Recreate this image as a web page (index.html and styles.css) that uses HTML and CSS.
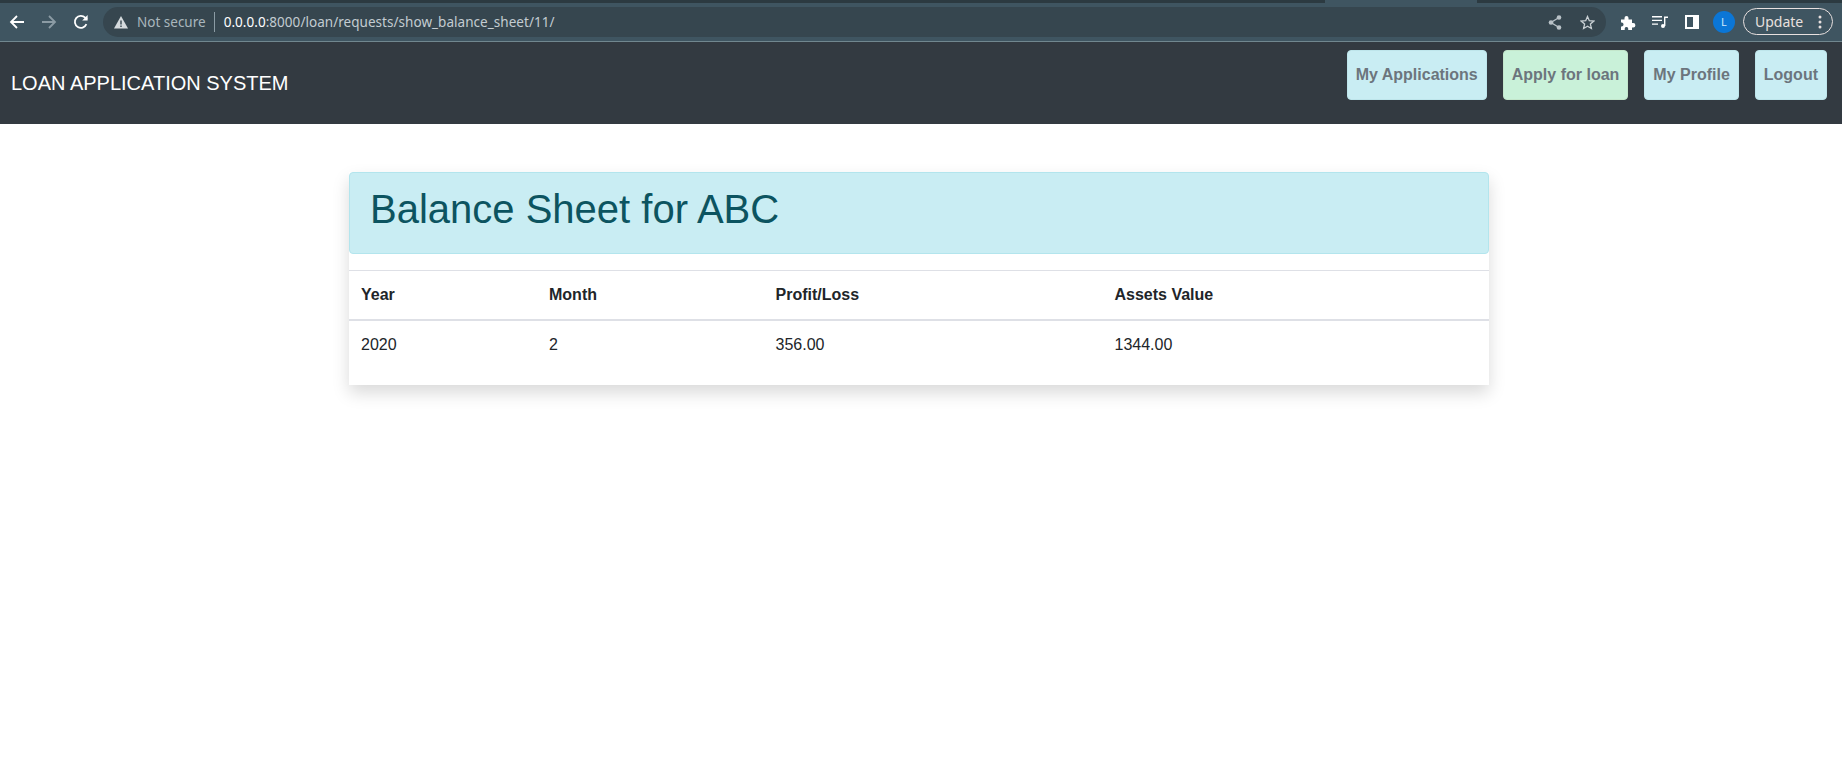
FILE: index.html
```html
<!DOCTYPE html>
<html lang="en">
<head>
    <meta charset="UTF-8">
    <meta name="viewport" content="width=device-width, initial-scale=1.0">
    <title>Balance Sheet for ABC</title>
    <link rel="stylesheet" href="styles.css">
</head>
<body>
    <div class="tabstrip">
        <div class="tab-active"></div>
    </div>
    <div class="toolbar">
        <span class="tool">
            <svg width="16" height="16" viewBox="0 0 16 16" fill="none" stroke="#fff" stroke-width="1.8"><path d="M15 8H2M8 2 2 8l6 6"/></svg>
        </span>
        <span class="tool">
            <svg width="16" height="16" viewBox="0 0 16 16" fill="none" stroke="#8b9ba4" stroke-width="1.8"><path d="M1 8h13M8 2l6 6-6 6"/></svg>
        </span>
        <span class="tool">
            <svg width="16" height="16" viewBox="0 0 16 16" fill="none" stroke="#fff" stroke-width="1.8"><path d="M13.4 10.2A6 6 0 1 1 12.2 3.7L14 5.4"/><path d="M14.6 1v5.4H9.2" fill="#fff" stroke="none"/></svg>
        </span>
        <div class="omnibox">
            <svg class="warn" width="14" height="13" viewBox="0 0 14 13"><path d="M7 0 14 12.500H0Z" fill="#d5dadd"/><path d="M6.300 4.500h1.400v4H6.300zM6.300 9.500h1.400v1.400H6.300z" fill="#36464f"/></svg>
            <span class="not-secure">Not secure</span>
            <span class="url"><b>0.0.0.0</b>:8000/loan/requests/show_balance_sheet/11/</span>
            <span class="omni-icons">
                <svg width="14" height="15" viewBox="0 0 14 15" fill="#b9c2c7"><circle cx="11" cy="2.500" r="2.300"/><circle cx="3" cy="7.500" r="2.300"/><circle cx="11" cy="12.500" r="2.300"/><path d="M11 2.500 3 7.500l8 5" fill="none" stroke="#b9c2c7" stroke-width="1.300"/></svg>
                <svg width="15" height="15" viewBox="0 0 15 15" fill="none" stroke="#c9d0d4" stroke-width="1.300"><path d="M7.500 1.500 9.300 5.700l4.500.4-3.400 3 1 4.400-3.900-2.300-3.900 2.300 1-4.400-3.400-3 4.500-.4Z"/></svg>
            </span>
        </div>
        <span class="tool">
            <svg width="15" height="15" viewBox="0 0 15 15" fill="#fff"><path d="M0 4.500h3.500V3a2 2 0 0 1 4 0v1.500H11V8h1.200a2.200 2.200 0 0 1 0 4.400H11V15H7.200v-1.500a1.800 1.800 0 0 0-3.500 0V15H0v-3.500h1a2 2 0 0 0 0-3.900H0Z"/></svg>
        </span>
        <span class="tool">
            <svg width="16" height="12" viewBox="0 0 16 12" fill="#fff"><path d="M0 0h10v1.400H0zM0 3.700h10v1.400H0zM0 7.400h6v1.400H0z"/><circle cx="11" cy="10" r="2"/><path d="M12 10V.4h4v1.500h-2.600V10z"/></svg>
        </span>
        <span class="tool">
            <svg width="14" height="14" viewBox="0 0 14 14"><path d="M0 0h14v14H0Zm2 2v10h6V2Z" fill="#fff" fill-rule="evenodd"/></svg>
        </span>
        <span class="tool"><span class="avatar">L</span></span>
        <div class="update">
            <span>Update</span>
            <svg width="4" height="14" viewBox="0 0 4 14" fill="#e8e0df"><circle cx="2" cy="2" r="1.500"/><circle cx="2" cy="7" r="1.500"/><circle cx="2" cy="12" r="1.500"/></svg>
        </div>
    </div>

    <nav class="navbar">
        <a class="brand" href="#">LOAN APPLICATION SYSTEM</a>
        <div class="nav-buttons">
            <a class="btn btn-info" href="#">My Applications</a>
            <a class="btn btn-success" href="#">Apply for loan</a>
            <a class="btn btn-info" href="#">My Profile</a>
            <a class="btn btn-info" href="#">Logout</a>
        </div>
    </nav>

    <div class="page">
        <div class="card">
            <div class="alert">
                <h1>Balance Sheet for ABC</h1>
            </div>
            <table class="sheet">
                <thead>
                    <tr>
                        <th class="col-year">Year</th>
                        <th class="col-month">Month</th>
                        <th class="col-profit">Profit/Loss</th>
                        <th>Assets Value</th>
                    </tr>
                </thead>
                <tbody>
                    <tr>
                        <td>2020</td>
                        <td>2</td>
                        <td>356.00</td>
                        <td>1344.00</td>
                    </tr>
                </tbody>
            </table>
        </div>
    </div>
</body>
</html>
```

FILE: styles.css
```css
* {
    box-sizing: border-box;
}
body {
    min-height: 100vh;
    margin: 0;
    font-family: "Liberation Sans", Arial, sans-serif;
    font-size: 16px;
    line-height: 1.5;
    color: #212529;
    background-color: #fff;
}

/* browser chrome */
.tabstrip {
    height: 3px;
    padding-left: 1325px;
    background-color: #2c3a41;
}
.tab-active {
    width: 152px;
    height: 3px;
    background-color: #3f5561;
}
.toolbar {
    display: flex;
    align-items: center;
    height: 39px;
    padding: 0 9px 0 1px;
    background-color: #3f5561;
    border-bottom: 1px solid #71878f;
}
.tool {
    display: flex;
    align-items: center;
    justify-content: center;
    flex: none;
    width: 32px;
    height: 30px;
}
.omnibox {
    display: flex;
    align-items: center;
    flex: 1;
    height: 30px;
    margin: 0 6px;
    padding: 0 11px 0 11px;
    border-radius: 15px;
    background-color: #36464f;
    font-family: "Noto Sans", sans-serif;
    font-size: 13.5px;
    color: #c3ccd1;
}
.warn {
    flex: none;
}
.not-secure {
    margin-left: 9px;
    padding-right: 8px;
    border-right: 1px solid #8b9ba4;
    line-height: 20px;
    color: #a9b6bd;
}
.url {
    margin-left: 9px;
    letter-spacing: 0.04px;
}
.url b {
    font-weight: 400;
    color: #fff;
}
.omni-icons {
    display: flex;
    align-items: center;
    gap: 18px;
    margin-left: auto;
}
.avatar {
    display: flex;
    align-items: center;
    justify-content: center;
    width: 22px;
    height: 22px;
    border-radius: 50%;
    background-color: #0b76d6;
    font-family: "Noto Sans", sans-serif;
    font-size: 11px;
    color: #cfe6fb;
}
.update {
    display: flex;
    align-items: center;
    justify-content: space-between;
    flex: none;
    width: 90px;
    height: 27px;
    margin: 0 0 1px 3px;
    padding: 0 10px 0 11px;
    border: 1px solid #e8e0df;
    border-radius: 14px;
    font-family: "Noto Sans", sans-serif;
    font-size: 14px;
    color: #e8e0df;
}

/* site navbar */
.navbar {
    display: flex;
    align-items: flex-start;
    justify-content: space-between;
    height: 82px;
    padding: 8px 15px 0 11px;
    background-color: #333a41;
}
.brand {
    margin-top: 18px;
    font-size: 20px;
    line-height: 30px;
    color: #fff;
    text-decoration: none;
}
.nav-buttons {
    display: flex;
    gap: 16px;
}
.btn {
    padding: 12px 8px;
    border: 1px solid #bee5eb;
    border-radius: 4px;
    font-weight: 700;
    color: #6c757d;
    text-decoration: none;
}
.btn-info {
    background-color: #c9edf3;
}
.btn-success {
    background-color: #c9f1d9;
    border-color: #c3e6cb;
}

/* balance sheet card */
.page {
    padding: 48px 4px 0 0;
}
.card {
    width: 1140px;
    margin: 0 auto;
    padding-bottom: 16px;
    background-color: #fff;
    box-shadow: 0 8px 16px rgba(0, 0, 0, 0.15);
}
.alert {
    margin-bottom: 16px;
    padding: 12px 20px;
    border: 1px solid #b3e5ed;
    border-radius: 4px;
    background-color: #c9edf3;
    color: #0c5460;
}
.alert h1 {
    margin: 0 0 8px 0;
    font-size: 40px;
    font-weight: 500;
    line-height: 1.2;
}
.sheet {
    width: 100%;
    border-collapse: collapse;
    table-layout: fixed;
}
.sheet th,
.sheet td {
    padding: 12px;
    text-align: left;
}
.sheet th {
    border-top: 1px solid #dee0e6;
    border-bottom: 2px solid #dee0e6;
}
.col-year {
    width: 188px;
}
.col-month {
    width: 226.5px;
}
.col-profit {
    width: 339px;
}
```
